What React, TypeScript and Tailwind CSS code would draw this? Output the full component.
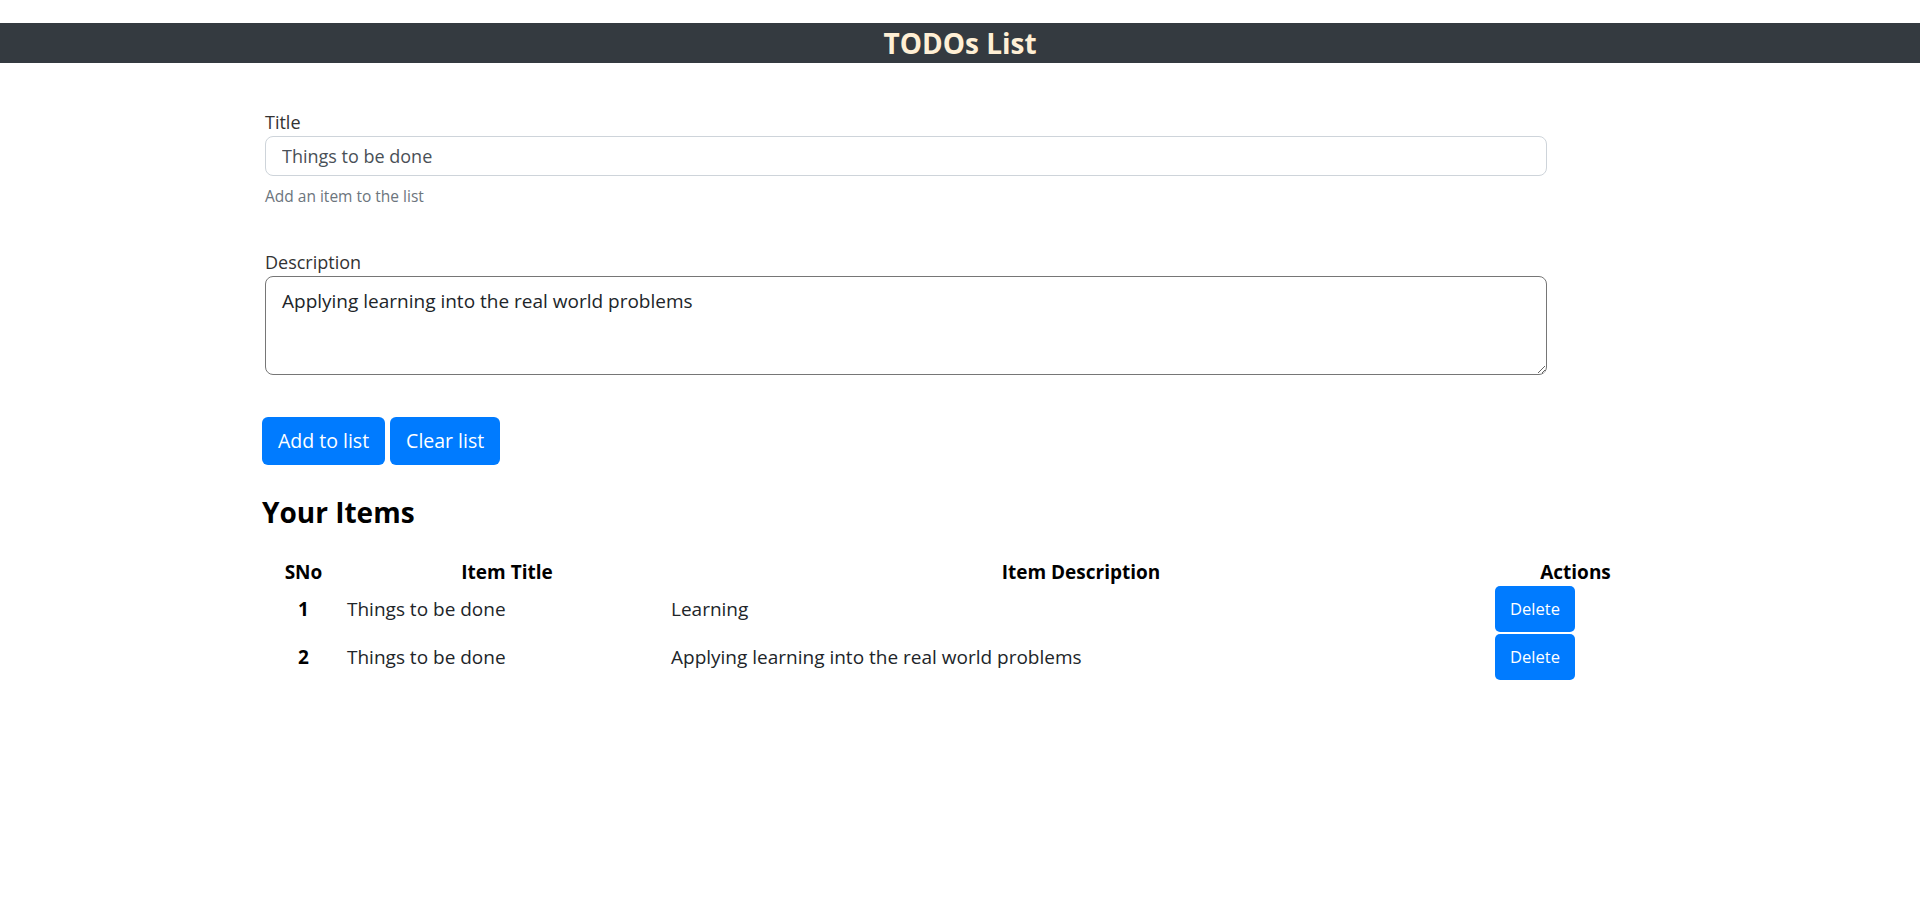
import { useState } from "react";

interface TodoItem {
 sno: number;
 title: string;
 desc: string;
}

const App = () => {
 const [title, setTitle] = useState("Things to be done");
 const [desc, setDesc] = useState("Applying learning into the real world problems");
 const [items, setItems] = useState<TodoItem[]>([
  { sno: 1, title: "Things to be done", desc: "Learning" },
  { sno: 2, title: "Things to be done", desc: "Applying learning into the real world problems" },
 ]);

 const addItem = () => {
  setItems([...items, { sno: items.length + 1, title, desc }]);
 };

 const removeItem = (sno: number) => {
  setItems(
   items
    .filter((it) => it.sno !== sno)
    .map((it, i) => ({ ...it, sno: i + 1 }))
  );
 };

 return (
  <div className="min-h-screen bg-white text-[#212529] font-['Open_Sans',sans-serif]">
   <div className="mt-[23px] h-[40px] bg-[#343a40] flex items-center justify-center">
    <h3 className="text-[28px] font-bold leading-none text-[#ffefd5]">TODOs List</h3>
   </div>

   <div className="w-[1396px] mx-auto pt-[46px]">
    <form
     className="ml-[3px] w-[1282px]"
     onSubmit={(e) => {
      e.preventDefault();
      addItem();
     }}
    >
     <label className="block text-[18px] leading-[27px] text-[#333]">Title</label>
     <input
      value={title}
      onChange={(e) => setTitle(e.target.value)}
      className="block w-full h-[40px] border border-[#ced4da] rounded-[8px] px-[16px] text-[18px] text-[#495057] outline-none"
     />
     <div className="mt-[10px] text-[15.5px] leading-[21px] text-[#6c757d]">Add an item to the list</div>

     <label className="block mt-[42px] text-[18px] leading-[27px] text-[#333]">Description</label>
     <textarea
      value={desc}
      onChange={(e) => setDesc(e.target.value)}
      className="block w-full h-[99px] border border-[#767676] rounded-[8px] px-[16px] pt-[10px] text-[19px] leading-[28px] outline-none"
     />
    </form>

    <div className="flex gap-[5px] mt-[42px]">
     <button
      onClick={addItem}
      className="h-[48px] px-[16px] rounded-[6px] bg-[#007bff] text-white text-[19.5px]"
     >
      Add to list
     </button>
     <button
      onClick={() => setItems([])}
      className="h-[48px] px-[16px] rounded-[6px] bg-[#007bff] text-white text-[19.5px]"
     >
      Clear list
     </button>
    </div>

    <h3 className="mt-[30px] text-[28px] font-bold leading-[34px] text-black">Your Items</h3>

    <table className="mt-[30px] w-full table-fixed border-collapse">
     <colgroup>
      <col className="w-[83px]" />
      <col className="w-[324px]" />
      <col className="w-[824px]" />
      <col className="w-[165px]" />
     </colgroup>
     <thead>
      <tr className="h-[26px] text-[19px] leading-[26px] font-bold text-black">
       <th className="text-center">SNo</th>
       <th className="text-center">Item Title</th>
       <th className="text-center">Item Description</th>
       <th className="text-center">Actions</th>
      </tr>
     </thead>
     <tbody>
      {items.map((it) => (
       <tr key={it.sno} className="text-[19px]">
        <th className="text-center font-bold text-black">{it.sno}</th>
        <td className="px-[2px]">{it.title}</td>
        <td className="px-[2px]">{it.desc}</td>
        <td className="px-[2px] py-[1px]">
         <button
          onClick={() => removeItem(it.sno)}
          className="block w-[80px] h-[46px] rounded-[5px] bg-[#007bff] text-white text-[16.5px]"
         >
          Delete
         </button>
        </td>
       </tr>
      ))}
     </tbody>
    </table>
   </div>
  </div>
 );
};

export default App;
